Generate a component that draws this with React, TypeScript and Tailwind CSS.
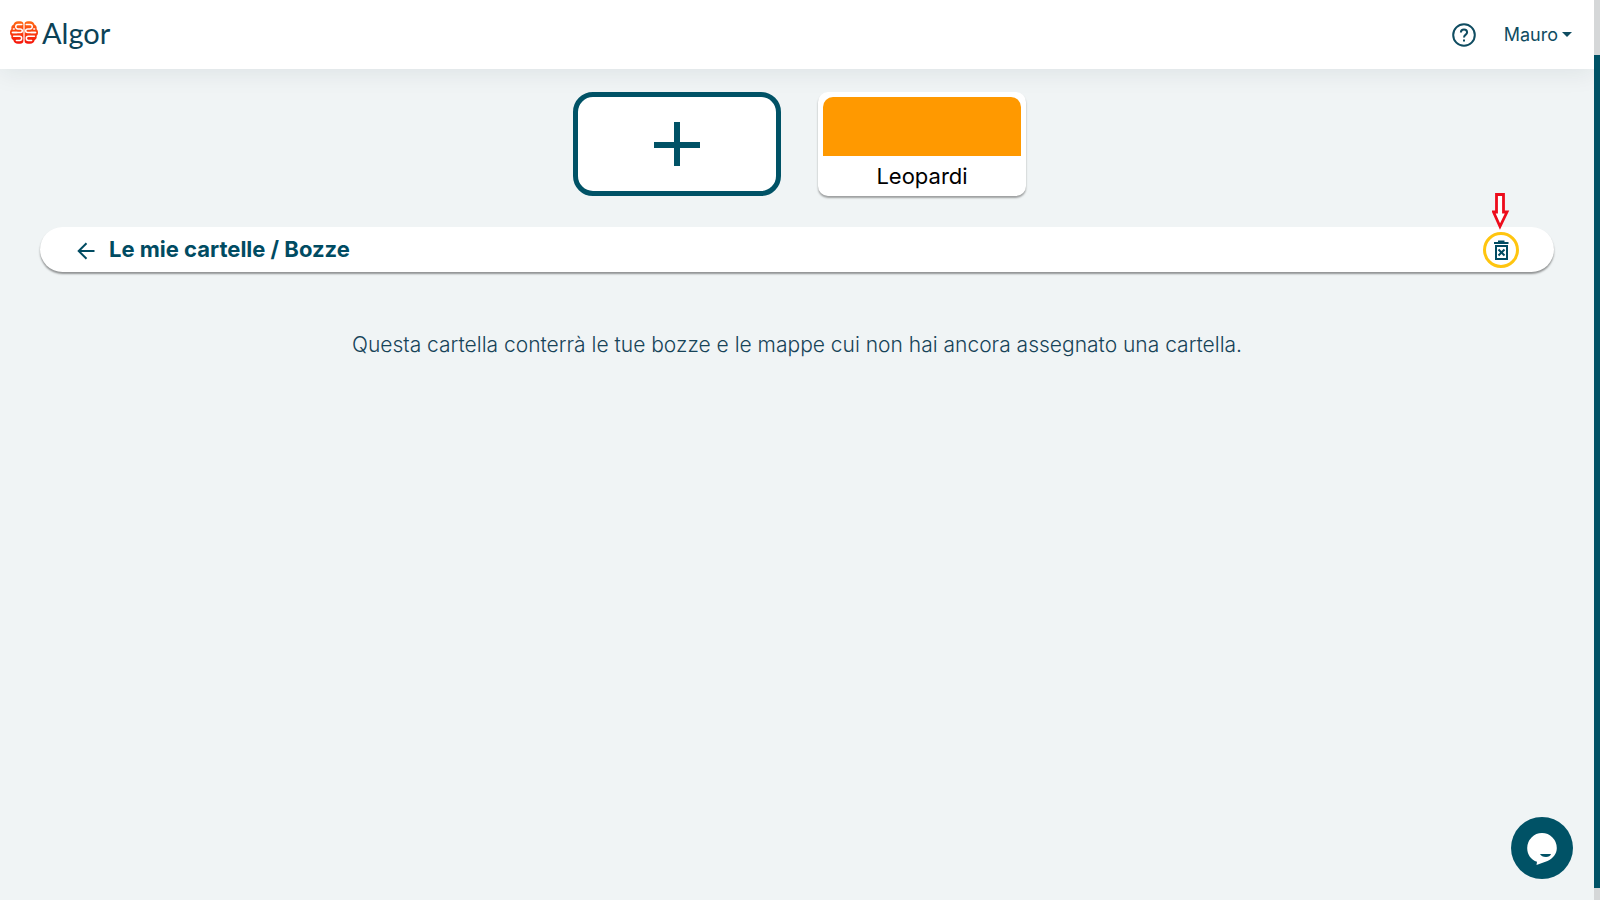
import type { ReactNode } from "react";

type FolderCardProps = {
  name: string;
  color: string;
};

function BrainLogo() {
  const half = (
    <>
      <path
        d="M13.400 3V20C13.400 21.800 12 22.800 10.200 22.800H8C5.500 22.800 3.800 21.300 3.400 19.200C1.600 18.400 0.900 16.600 1.500 14.900C-0.500 13.500 -0.500 9.500 1.500 8.100C0.900 6.400 1.600 4.600 3.400 3.800C3.800 1.700 5.500 0.200 8 0.200H10.200C12 0.200 13.400 1.200 13.400 3Z"
        fill="url(#brain)"
      />
      <g stroke="white" strokeWidth="1.500" fill="none" strokeLinecap="round">
        <path d="M11.800 3.600H8C5 3.600 5 8 8 8H10.200C13 8 13 11.500 10.200 11.500H2.500" />
        <path d="M2.500 11.500H7M3.400 7.900H4.200" />
        <path d="M3.600 15.200H9.600C12.400 15.200 12.400 19.400 9.600 19.400H6.400" />
      </g>
    </>
  );

  return (
    <svg viewBox="0 0 28 23" className="h-[23px] w-7" aria-hidden="true">
      <defs>
        <linearGradient id="brain" gradientUnits="userSpaceOnUse" x1="0" y1="0" x2="0" y2="23">
          <stop offset="0" stopColor="#ff6a13" />
          <stop offset="1" stopColor="#f5130b" />
        </linearGradient>
      </defs>
      {half}
      <g transform="translate(28 0) scale(-1 1)">{half}</g>
    </svg>
  );
}

function Header() {
  return (
    <header className="flex h-[69px] items-center justify-between bg-white pr-[22px] pl-2.5 shadow-[0_4px_24px_rgba(0,40,50,0.08)]">
      <a href="#" className="flex items-center gap-1 pb-1 text-[#0b4257]">
        <BrainLogo />
        <span className="font-['Lato',sans-serif] text-[29px] leading-8">Algor</span>
      </a>

      <div className="flex items-center gap-7 text-[#0f4c61]">
        <button type="button" aria-label="Aiuto">
          <svg viewBox="0 0 24 24" className="size-6" fill="none" stroke="currentColor" strokeWidth="2" aria-hidden="true">
            <circle cx="12" cy="12" r="10.800" />
            <path d="M8.900 9.600A3.100 3.100 0 0 1 15.100 9.600C15.100 11.600 12 11.700 12 14.400" />
            <path d="M12 16.400V18.400" />
          </svg>
        </button>
        <button type="button" className="flex items-center gap-1 text-[18px] leading-6">
          Mauro
          <span className="border-x-[5px] border-t-[5px] border-x-transparent border-t-[#0f4c61]" />
        </button>
      </div>
    </header>
  );
}

function NewFolderButton() {
  return (
    <button
      type="button"
      aria-label="Nuova cartella"
      className="flex h-[104px] w-52 items-center justify-center rounded-[20px] border-[5px] border-[#005266] bg-white text-[#005266]"
    >
      <svg viewBox="0 0 46 46" className="size-[46px]" stroke="currentColor" strokeWidth="6" aria-hidden="true">
        <path d="M23 1V45M0 24H46" />
      </svg>
    </button>
  );
}

function FolderCard({ name, color }: FolderCardProps) {
  return (
    <button type="button" className="flex h-[104px] w-52 flex-col rounded-[10px] bg-white p-[5px] shadow-[0_2px_2px_rgba(0,0,0,0.35)]">
      <span className={`h-[59px] w-full shrink-0 rounded-t-[10px] ${color}`} />
      <span className="w-full pt-1.5 text-center text-[22px] leading-7 text-black">{name}</span>
    </button>
  );
}

function Highlight({ children }: { children: ReactNode }) {
  return (
    <div className="relative flex size-9 items-center justify-center rounded-full border-[3px] border-[#ffc50f]">
      <svg
        viewBox="0 0 18 42"
        className="absolute bottom-full left-1/2 h-[42px] w-[18px] -translate-x-1/2"
        fill="white"
        stroke="#ed0c1b"
        strokeWidth="2.800"
        aria-hidden="true"
      >
        <path d="M4.500 1.500H11.500V19H15L8 33.500L1.500 19H4.500Z" />
      </svg>
      {children}
    </div>
  );
}

function FolderBar() {
  return (
    <nav className="mx-10 flex h-[45px] items-center rounded-[23px] bg-white pr-[35px] pl-[37px] text-[#004b62] shadow-[0_2px_2px_rgba(0,0,0,0.4)]">
      <button type="button" aria-label="Indietro" className="pt-0.5">
        <svg viewBox="0 0 18 18" className="size-[18px]" fill="none" stroke="currentColor" strokeWidth="2" aria-hidden="true">
          <path d="M17.500 9H2M9.500 1.200L1.700 9L9.500 16.800" />
        </svg>
      </button>
      <h1 className="ml-3.5 flex-1 pb-0.5 text-[22px] leading-7 font-bold">Le mie cartelle / Bozze</h1>
      <Highlight>
        <button type="button" aria-label="Svuota cartella">
          <svg viewBox="0 0 16 20" className="h-5 w-4" fill="none" stroke="currentColor" strokeWidth="2" aria-hidden="true">
            <path d="M1 3H15.500M5 1.500H11.500" />
            <path d="M3 6H14V19H3Z" />
            <path d="M5.500 9.500L11.500 15.500M11.500 9.500L5.500 15.500" />
          </svg>
        </button>
      </Highlight>
    </nav>
  );
}

function ChatButton() {
  return (
    <button type="button" aria-label="Chat" className="fixed right-[27px] bottom-[21px] size-[62px] rounded-full bg-[#005266]">
      <svg viewBox="0 0 62 62" className="size-[62px]" aria-hidden="true">
        <path d="M31 16A14.800 15 0 0 1 45.800 31C45.800 37 42 41.500 36.500 44L25.500 48L26 44.800C20 43 16.200 37.500 16.200 31A14.800 15 0 0 1 31 16Z" fill="white" />
        <path d="M29 37H40C39.500 38.800 37.500 40 35 40C32 40 30 38.800 29 37Z" fill="#005266" />
      </svg>
    </button>
  );
}

export default function App() {
  return (
    <div className="flex min-h-screen bg-[#f0f4f5] font-['Inter',sans-serif]">
      <div className="min-w-0 flex-1">
        <Header />
        <main>
          <section className="flex flex-wrap justify-center gap-[37px] pt-[23px] pb-[31px] pl-[5px]">
            <NewFolderButton />
            <FolderCard name="Leopardi" color="bg-[#ff9900]" />
          </section>
          <FolderBar />
          <p className="px-10 pt-[57px] text-center text-[21px] leading-8 font-light text-[#174358]">
            Questa cartella conterrà le tue bozze e le mappe cui non hai ancora assegnato una cartella.
          </p>
        </main>
      </div>

      <div className="flex w-1.5 flex-col bg-[#d5d7d8] pt-[55px] pb-3">
        <div className="flex-1 bg-[#005266]" />
      </div>
      <ChatButton />
    </div>
  );
}
